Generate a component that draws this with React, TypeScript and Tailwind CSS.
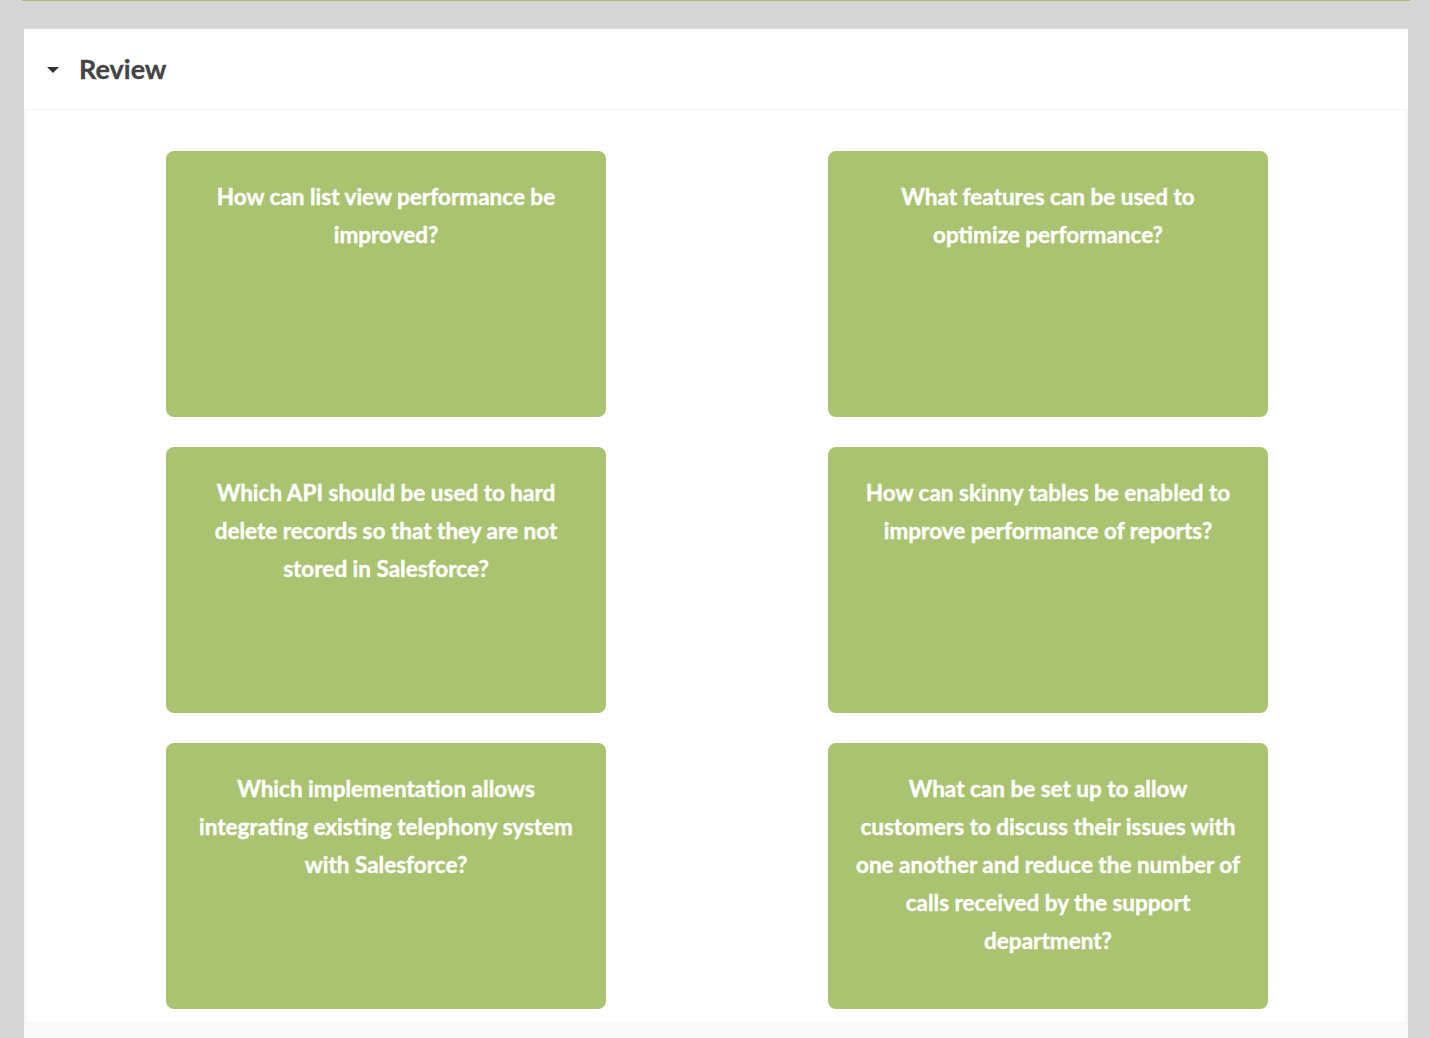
const cards: string[][] = [
  ["How can list view performance be", "improved?"],
  ["What features can be used to", "optimize performance?"],
  ["Which API should be used to hard", "delete records so that they are not", "stored in Salesforce?"],
  ["How can skinny tables be enabled to", "improve performance of reports?"],
  ["Which implementation allows", "integrating existing telephony system", "with Salesforce?"],
  [
    "What can be set up to allow",
    "customers to discuss their issues with",
    "one another and reduce the number of",
    "calls received by the support",
    "department?",
  ],
];

export default function App() {
  return (
    <div className="min-h-screen bg-[#d6d6d6] font-['Lato','Liberation_Sans',sans-serif]">
      <div className="ml-[22px] mr-[20px] h-px bg-[#a8c36c]" />

      <div className="mt-[28px] ml-[24px] mr-[22px] bg-white">
        <div className="flex h-[81px] items-center border-b border-[#f2f2f2] pl-[23px]">
          <span className="mt-[1px] h-0 w-0 border-x-[6px] border-t-[6px] border-x-transparent border-t-[#333]" />
          <h2 className="ml-[20px] text-[27px] font-bold text-[#444] [-webkit-text-stroke:0.3px_#444]">
            Review
          </h2>
        </div>

        <div className="border-x-2 border-[#f7f7f7] pt-[41px] pb-[13px]">
          <div className="ml-[2px] grid grid-cols-[440px_440px] justify-center gap-x-[222px] gap-y-[30px]">
            {cards.map((lines) => (
              <div
                key={lines[0]}
                className="h-[266px] rounded-lg bg-[#aac370] px-[15px] pt-[27px] text-center text-[22.5px] font-bold leading-[38px] whitespace-nowrap text-white [-webkit-text-stroke:0.4px_white]"
              >
                {lines.map((l) => (
                  <div key={l}>{l}</div>
                ))}
              </div>
            ))}
          </div>
        </div>

        <div className="h-[20px] bg-[#f9f9f9]" />
      </div>
    </div>
  );
}
